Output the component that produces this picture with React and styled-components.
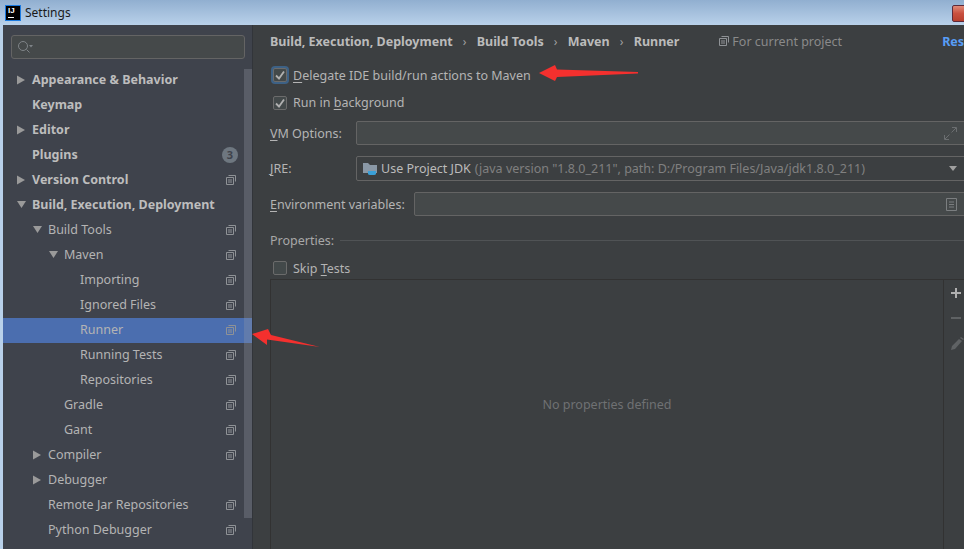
import React from 'react';
import styled, { createGlobalStyle } from 'styled-components';

const GlobalStyle = createGlobalStyle`
  html, body { margin: 0; padding: 0; background: #3c3f41; }
  #root { width: 964px; height: 549px; overflow: hidden; }
  * { box-sizing: border-box; }
  u { text-underline-offset: 2px; }
`;

const Window = styled.div`
  position: relative;
  width: 964px;
  height: 549px;
  overflow: hidden;
  display: flex;
  flex-direction: column;
  font-family: "Noto Sans", "Open Sans", sans-serif;
  font-size: 12.5px;
  color: #bbbbbb;
  background: #3c3f41;
`;

const TitleBar = styled.div`
  height: 25px;
  flex: none;
  display: flex;
  align-items: center;
  padding-left: 5px;
  gap: 4px;
  background: linear-gradient(#91afd0, #b9d1ea);
  color: #1a1a1a;
  font-size: 12px;
`;

const AppLogo = styled.div`
  width: 16px;
  height: 16px;
  background: #000;
  outline: 1px solid #1b7ae0;
  outline-offset: -1px;
  color: #fff;
  font-family: "Liberation Sans", sans-serif;
  font-size: 8px;
  font-weight: 700;
  line-height: 11px;
  padding-left: 3px;
  position: relative;
  &::after {
    content: '';
    position: absolute;
    left: 3px;
    bottom: 3px;
    width: 6px;
    height: 1px;
    background: #fff;
  }
`;

const CloseButton = styled.div`
  position: absolute;
  left: 952px;
  top: 5px;
  width: 30px;
  height: 17px;
  border: 1px solid #5d2a3a;
  border-radius: 2px;
  background: linear-gradient(#e08a78, #c9503f 50%, #b8402f);
`;

const Body = styled.div`
  flex: 1;
  min-height: 0;
  display: flex;
  border-left: 3px solid #b9d1ea;
`;

const Sidebar = styled.aside`
  position: relative;
  width: 250px;
  flex: none;
  background: #3f434c;
  border-right: 1px solid #32353a;
  display: flex;
  flex-direction: column;
`;

const SearchBox = styled.div`
  margin: 10px 7px 9px 8px;
  height: 24px;
  flex: none;
  border: 1px solid #646464;
  border-radius: 3px;
  background: #45494a;
  display: flex;
  align-items: center;
  padding-left: 5px;
`;

const Tree = styled.div`
  display: flex;
  flex-direction: column;
`;

const Row = styled.div`
  height: 25px;
  flex: none;
  display: flex;
  align-items: center;
  padding: 0 16px 2px ${(p) => p.$indent}px;
  background: ${(p) => (p.$selected ? '#4b6eaf' : 'transparent')};
  font-weight: ${(p) => (p.$bold ? 700 : 400)};
  color: ${(p) => (p.$bold ? '#bdbdbd' : '#b4b4b4')};
`;

const RowLabel = styled.span`
  flex: 1;
  white-space: nowrap;
`;

const ArrowSlot = styled.span`
  width: 15px;
  margin-left: -15px;
  display: flex;
`;

const Badge = styled.span`
  width: 16px;
  height: 16px;
  margin-right: -2px;
  border-radius: 50%;
  background: #6e7780;
  color: #3f434c;
  font-size: 11px;
  line-height: 16px;
  text-align: center;
`;

const ScrollThumb = styled.div`
  position: absolute;
  left: 241px;
  top: 44px;
  width: 8px;
  height: 449px;
  background: rgba(150, 155, 165, 0.3);
`;

const Panel = styled.main`
  width: 730px;
  flex: none;
  padding: 0 6px 0 17px;
  display: flex;
  flex-direction: column;
  background: #3c3f41;
`;

const Header = styled.div`
  height: 32px;
  flex: none;
  display: flex;
  align-items: center;
  white-space: nowrap;
`;

const Crumb = styled.span`
  font-weight: 700;
  color: #bbbbbb;
`;

const CrumbSep = styled.span`
  width: 24px;
  text-align: center;
  color: #a0a0a0;
  font-size: 12px;
`;

const ProjectScope = styled.span`
  margin-left: 40px;
  display: flex;
  align-items: center;
  gap: 3px;
  color: #8a8a8a;
`;

const ResetLink = styled.span`
  margin-left: auto;
  font-weight: 700;
  color: #589df6;
`;

const CheckRow = styled.label`
  height: ${(p) => p.$height}px;
  flex: none;
  display: flex;
  align-items: center;
  gap: 6px;
  padding-left: 3px;
  padding-top: ${(p) => p.$nudge || 0}px;
  color: #b4b4b4;
`;

const CheckBox = styled.span`
  width: 14px;
  height: 14px;
  flex: none;
  display: flex;
  align-items: center;
  justify-content: center;
  border: 1px solid #6b6b6b;
  border-radius: 2px;
  background: #43494a;
  box-shadow: ${(p) => (p.$focus ? '0 0 0 2px #3d6185' : 'none')};
`;

const FieldRow = styled.div`
  height: ${(p) => p.$height}px;
  flex: none;
  display: flex;
  align-items: center;
  color: #b4b4b4;
  white-space: nowrap;
`;

const FieldLabel = styled.span`
  width: ${(p) => p.$width}px;
  flex: none;
`;

const Field = styled.div`
  flex: 1;
  height: ${(p) => p.$height || 24}px;
  display: flex;
  align-items: center;
  justify-content: space-between;
  padding: 0 19px 0 6px;
  border: 1px solid #646464;
  border-radius: 2px;
  background: ${(p) => (p.$flat ? '#3c3f41' : '#45494a')};
`;

const ComboValue = styled.span`
  display: flex;
  align-items: center;
  white-space: nowrap;
`;

const JdkName = styled.span`
  margin-left: 3px;
  color: #bbbbbb;
`;

const JdkPath = styled.span`
  margin-left: 4px;
  color: #808080;
`;

const SectionTitle = styled.div`
  height: 30px;
  flex: none;
  display: flex;
  align-items: center;
  gap: 6px;
  color: #a8a8a8;
  &::after {
    content: '';
    flex: 1;
    height: 1px;
    background: #505355;
  }
`;

const TableWrap = styled.div`
  flex: none;
  height: 270px;
  display: flex;
  border-top: 1px solid #323232;
  border-left: 1px solid #323232;
`;

const EmptyTable = styled.div`
  width: 673px;
  flex: none;
  padding-top: 116px;
  text-align: center;
  color: #6f7173;
  border-right: 1px solid #323232;
`;

const TableTools = styled.div`
  flex: 1;
  display: flex;
  flex-direction: column;
  align-items: flex-start;
  gap: 13px;
  padding: 7px 0 0 6px;
`;

const Overlay = styled.svg`
  position: absolute;
  left: 0;
  top: 0;
  pointer-events: none;
`;

const TreeArrow = ({ open }) => (
  <svg width='10' height='10' viewBox='0 0 10 10'>
    <path d={open ? 'M0 1h9L4.500 8z' : 'M0 .5l8 4.500-8 4.500z'} fill='#9a9a9a' />
  </svg>
);

const ScopeIcon = () => (
  <svg width='10' height='10' viewBox='0 0 10 10' fill='none' stroke='#8f9296' style={{ flex: 'none' }}>
    <path d='M2.500 .5h7v6M.5 2.500h7v7h-7z' />
    <path d='M2 5h4M2 7h4' />
  </svg>
);

const rows = [
  { label: 'Appearance & Behavior', indent: 29, bold: true, arrow: 'closed' },
  { label: 'Keymap', indent: 29, bold: true },
  { label: 'Editor', indent: 29, bold: true, arrow: 'closed' },
  { label: 'Plugins', indent: 29, bold: true, badge: '3' },
  { label: 'Version Control', indent: 29, bold: true, arrow: 'closed', scope: true },
  { label: 'Build, Execution, Deployment', indent: 29, bold: true, arrow: 'open' },
  { label: 'Build Tools', indent: 45, arrow: 'open', scope: true },
  { label: 'Maven', indent: 61, arrow: 'open', scope: true },
  { label: 'Importing', indent: 77, scope: true },
  { label: 'Ignored Files', indent: 77, scope: true },
  { label: 'Runner', indent: 77, scope: true, selected: true },
  { label: 'Running Tests', indent: 77, scope: true },
  { label: 'Repositories', indent: 77, scope: true },
  { label: 'Gradle', indent: 61, scope: true },
  { label: 'Gant', indent: 61, scope: true },
  { label: 'Compiler', indent: 45, arrow: 'closed', scope: true },
  { label: 'Debugger', indent: 45, arrow: 'closed' },
  { label: 'Remote Jar Repositories', indent: 45, scope: true },
  { label: 'Python Debugger', indent: 45, scope: true },
];

const Check = () => (
  <svg width='10' height='10' viewBox='0 0 10 10' fill='none'>
    <path d='M1 5.500L4 8.500 9 1.500' stroke='#b0b0b0' strokeWidth='1.800' />
  </svg>
);

export default function App() {
  return (
    <Window>
      <GlobalStyle />
      <TitleBar>
        <AppLogo>IJ</AppLogo>
        Settings
      </TitleBar>
      <CloseButton />
      <Body>
        <Sidebar>
          <SearchBox>
            <svg width='16' height='14' viewBox='0 0 16 14' fill='none'>
              <circle cx='6' cy='6' r='4.500' stroke='#7f8488' />
              <path d='M9.500 9.500L12.500 12.500' stroke='#7f8488' />
              <path d='M12 5h4l-2 2.500z' fill='#7f8488' />
            </svg>
          </SearchBox>
          <Tree>
            {rows.map((r) => (
              <Row key={r.label} $indent={r.indent} $bold={r.bold} $selected={r.selected}>
                {r.arrow && (
                  <ArrowSlot>
                    <TreeArrow open={r.arrow === 'open'} />
                  </ArrowSlot>
                )}
                <RowLabel>{r.label}</RowLabel>
                {r.scope && <ScopeIcon />}
                {r.badge && <Badge>{r.badge}</Badge>}
              </Row>
            ))}
          </Tree>
          <ScrollThumb />
        </Sidebar>
        <Panel>
          <Header>
            <Crumb>Build, Execution, Deployment</Crumb>
            <CrumbSep>›</CrumbSep>
            <Crumb>Build Tools</Crumb>
            <CrumbSep>›</CrumbSep>
            <Crumb>Maven</Crumb>
            <CrumbSep>›</CrumbSep>
            <Crumb>Runner</Crumb>
            <ProjectScope>
              <ScopeIcon />
              For current project
            </ProjectScope>
            <ResetLink>Reset</ResetLink>
          </Header>
          <CheckRow $height={36}>
            <CheckBox $focus>
              <Check />
            </CheckBox>
            <span>
              <u>D</u>elegate IDE build/run actions to Maven
            </span>
          </CheckRow>
          <CheckRow $height={19}>
            <CheckBox>
              <Check />
            </CheckBox>
            <span>
              Run in <u>b</u>ackground
            </span>
          </CheckRow>
          <FieldRow $height={42}>
            <FieldLabel $width={86}>
              <u>V</u>M Options:
            </FieldLabel>
            <Field>
              <span />
              <svg width='13' height='13' viewBox='0 0 13 13' fill='none' stroke='#6b6e70'>
                <path d='M7.500 5.500L12 1M8 .5h4.500V5M5.500 7.500L1 12M.5 8v4.500H5' />
              </svg>
            </Field>
          </FieldRow>
          <FieldRow $height={29}>
            <FieldLabel $width={86}>
              <u>J</u>RE:
            </FieldLabel>
            <Field $flat $height={25}>
              <ComboValue>
                <svg width='15' height='14' viewBox='0 0 15 14'>
                  <path d='M0 1h5l2 2h7v8H0z' fill='#8a98a6' />
                  <path d='M5 9h8v2.500q0 1.500-2 1.500H7q-2 0-2-1.500z' fill='#3aa0d8' />
                </svg>
                <JdkName>Use Project JDK</JdkName>
                <JdkPath>(java version "1.8.0_211", path: D:/Program Files/Java/jdk1.8.0_211)</JdkPath>
              </ComboValue>
              <svg width='8' height='5' viewBox='0 0 8 5'>
                <path d='M0 0h8L4 5z' fill='#a0a0a0' />
              </svg>
            </Field>
          </FieldRow>
          <FieldRow $height={42}>
            <FieldLabel $width={144}>
              <u>E</u>nvironment variables:
            </FieldLabel>
            <Field>
              <span />
              <svg width='11' height='13' viewBox='0 0 11 13' fill='none' stroke='#7b7e80'>
                <path d='M.5 .5h10v12H.5zM3 4h5M3 6.500h5M3 9h5' />
              </svg>
            </Field>
          </FieldRow>
          <SectionTitle>Properties:</SectionTitle>
          <CheckRow $height={24} $nudge={2}>
            <CheckBox />
            <span>
              Skip <u>T</u>ests
            </span>
          </CheckRow>
          <TableWrap>
            <EmptyTable>No properties defined</EmptyTable>
            <TableTools>
              <svg width='12' height='12' viewBox='0 0 12 12'>
                <path d='M5 1h2v4h4v2H7v4H5V7H1V5h4z' fill='#b0b0b0' />
              </svg>
              <svg width='12' height='12' viewBox='0 0 12 12'>
                <path d='M1 5h10v2H1z' fill='#5f6264' />
              </svg>
              <svg width='14' height='14' viewBox='0 0 14 14'>
                <path d='M1 13l1-4 7-7 3 2-7 8zM10 1l1-1 3 2-1 1z' fill='#5f6264' />
              </svg>
            </TableTools>
          </TableWrap>
        </Panel>
      </Body>
      <Overlay width='964' height='549' viewBox='0 0 964 549'>
        <path d='M539 73L555 65L557 69.500L638 72L638 73.500L557 77L555 81Z' fill='#f4302e' />
        <path d='M252 334L268 329L271 335L320 347L267 339.500L267 345Z' fill='#f4302e' />
      </Overlay>
    </Window>
  );
}
